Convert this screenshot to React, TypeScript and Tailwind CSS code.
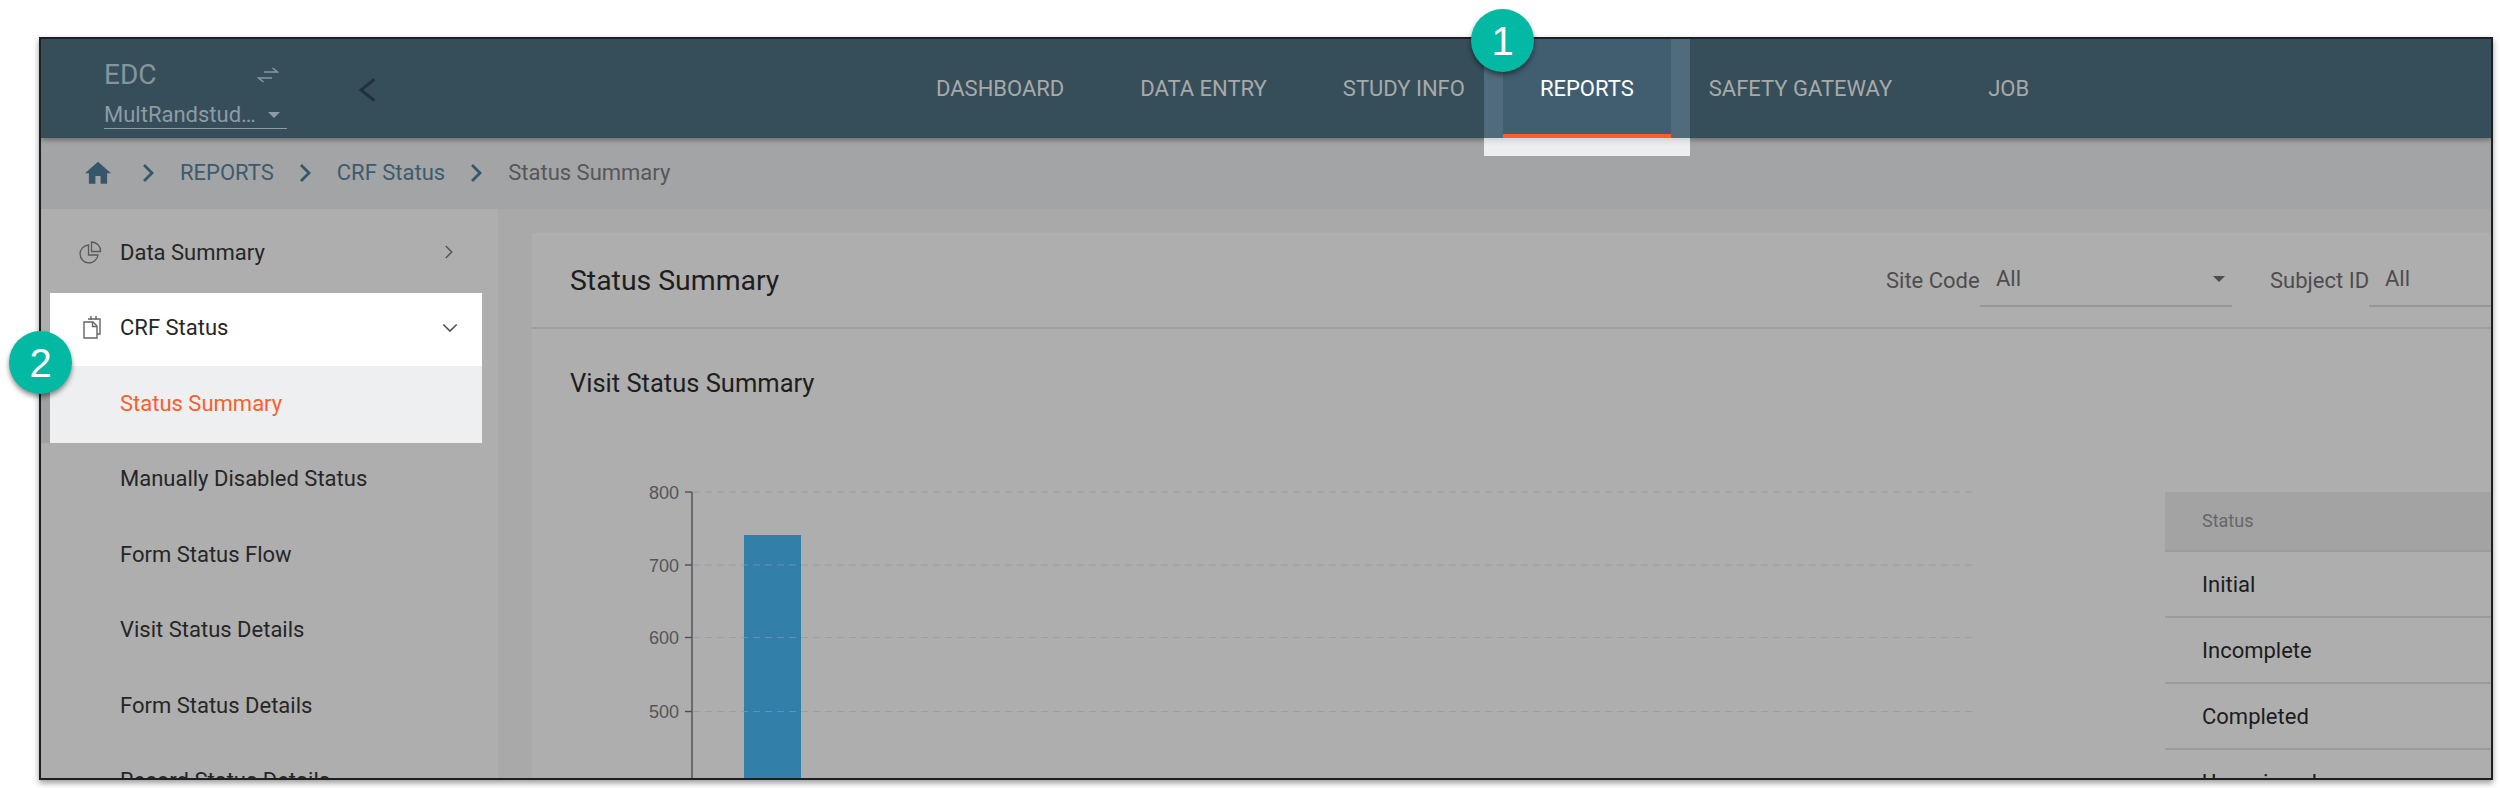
import React from "react";

const Chevron = ({ dir, size, color, width = 2 }: { dir: "left" | "right" | "down"; size: number; color: string; width?: number }) => {
  const d = dir === "left" ? "M16 4 L6 12 L16 20" : dir === "right" ? "M9 4 L17 12 L9 20" : "M4 9 L12 17 L20 9";
  return (
    <svg width={size} height={size} viewBox="0 0 24 24" fill="none" stroke={color} strokeWidth={width} className="shrink-0">
      <path d={d} />
    </svg>
  );
};

const CrumbChevron = () => (
  <div className="flex w-[22px] shrink-0 justify-center">
    <svg width="12" height="18" viewBox="0 0 12 18" fill="none" stroke="#37566a" strokeWidth="2.8">
      <path d="M2 1 L10 9 L2 17" />
    </svg>
  </div>
);

const Caret = ({ color }: { color: string }) => (
  <svg width="12" height="6" viewBox="0 0 12 6" className="shrink-0">
    <path d="M0 0 H12 L6 6 Z" fill={color} />
  </svg>
);

const Swap = () => (
  <svg width="22" height="16" viewBox="0 0 22 16" fill="none" stroke="#8797a0" strokeWidth="1.6">
    <path d="M7 5 H20 M15.5 1 L20.5 5 L15.5 5" />
    <path d="M15 11 H2 M6.5 15 L1.5 11 L6.5 11" />
  </svg>
);

const Home = () => (
  <svg width="26" height="24" viewBox="2 3 20 17.5" fill="#37566a" className="shrink-0">
    <path d="M10 20v-6h4v6h5v-8h3L12 3 2 12h3v8z" />
  </svg>
);

const PieIcon = () => (
  <svg width="23" height="23" viewBox="0 0 23 23" fill="none" stroke="#5a5a5a" strokeWidth="1.3">
    <path d="M9.5 4 A9 9 0 1 0 19 14 H9.5 Z" />
    <path d="M12.5 1 A9 9 0 0 1 21.5 10.5 H12.5 Z" />
  </svg>
);

const DocIcon = () => (
  <svg width="18" height="24" viewBox="0 0 18 24" fill="none" stroke="#666" strokeWidth="1.4">
    <path d="M5 4 H17 V19 H14" />
    <path d="M1 7 H10 L14 11 V23 H1 Z" />
    <path d="M9.5 7 V11.5 H14" />
    <path d="M8 1 V5 M13 1 V5" />
  </svg>
);

const navItems = ["DASHBOARD", "DATA ENTRY", "STUDY INFO", "REPORTS", "SAFETY GATEWAY", "JOB"];
const subItems = ["Manually Disabled Status", "Form Status Flow", "Visit Status Details", "Form Status Details", "Record Status Details"];
const rows = ["Initial", "Incomplete", "Completed", "Unassigned"];
const ticks = [
  { y: 12, label: "800" },
  { y: 85, label: "700" },
  { y: 157.5, label: "600" },
  { y: 231.5, label: "500" },
  { y: 305, label: "400" },
];

const Badge = ({ n, cls }: { n: string; cls: string }) => (
  <div className={`absolute z-30 flex h-[63px] w-[63px] items-center justify-center rounded-full bg-[#03b9a3] font-['Liberation_Sans',sans-serif] text-[40px] leading-none text-white shadow-[0_3px_5px_rgba(0,0,0,0.45)] ${cls}`}>
    {n}
  </div>
);

export default function App() {
  return (
    <div className="relative h-[788px] w-[2500px] overflow-hidden bg-white pl-[39px] pt-[37px] font-[Roboto,sans-serif]">
      <Badge n="1" cls="left-[1471px] top-[9px]" />
      <Badge n="2" cls="left-[9px] top-[331px]" />
      <div className="flex h-[743px] w-[2454px] flex-col overflow-hidden border-2 border-[#1d1f21] bg-[#aeaeae] shadow-[0_3px_6px_rgba(0,0,0,0.4)]">
        {/* header */}
        <header className="relative z-20 flex h-[99px] shrink-0 bg-[#364e5a] shadow-[0_2px_5px_rgba(0,0,0,0.35)]">
          <div className="ml-[63px] flex w-[183px] shrink-0 flex-col pt-[21px]">
            <div className="flex h-[30px] items-center justify-between pr-[8px]">
              <span className="text-[28px] leading-[30px] text-[#84959e]">EDC</span>
              <Swap />
            </div>
            <div className="mt-[12px] flex h-[27px] items-center justify-between border-b border-[#8d9ca4] pr-[7px] text-[22px] leading-[26px] text-[#8d9ca4]">
              <span>MultRandstud…</span>
              <Caret color="#8d9ca4" />
            </div>
          </div>
          <div className="ml-[66px] flex items-center pt-[2px]">
            <Chevron dir="left" size={32} color="#1f323c" width={2.2} />
          </div>
          <nav className="ml-[513px] flex h-full text-[22px] text-[#a8a9a9]">
            {navItems.map((t) =>
              t === "REPORTS" ? (
                <div key={t} className="relative -mx-[19px] flex h-full items-center border-x-[19px] border-[#4f6b7c] bg-[#405e70] px-[37px] text-white">
                  <span>{t}</span>
                  <div className="absolute inset-x-0 bottom-0 h-[4px] bg-[#f9602a]" />
                  <div className="absolute -inset-x-[19px] top-full h-[18px] bg-gradient-to-b from-[#d3d5d7] to-[#eceef0] to-40%" />
                </div>
              ) : (
                <div key={t} className={`flex h-full items-center whitespace-nowrap px-[38px] ${t === "JOB" ? "ml-[20px]" : ""}`}>
                  {t}
                </div>
              )
            )}
          </nav>
        </header>

        {/* breadcrumb */}
        <div className="flex h-[71px] shrink-0 items-center bg-[#a3a4a6] pb-[2px] pl-[44px] text-[22px]">
          <Home />
          <div className="ml-[26px]"><CrumbChevron /></div>
          <span className="ml-[21px] text-[#3d5b6c]">REPORTS</span>
          <div className="ml-[20px]"><CrumbChevron /></div>
          <span className="ml-[21px] text-[#3d5b6c]">CRF Status</span>
          <div className="ml-[20px]"><CrumbChevron /></div>
          <span className="ml-[21px] text-[#555759]">Status Summary</span>
        </div>

        <div className="flex min-h-0 flex-1">
          {/* sidebar */}
          <aside className="w-[457px] shrink-0 bg-[#aeaeae] text-[22px] text-[#262626]">
            <div className="flex h-[84px] items-center pl-[38px] pr-[41px] pt-[2px]">
              <PieIcon />
              <span className="ml-[18px] flex-1">Data Summary</span>
              <Chevron dir="right" size={18} color="#555" width={2} />
            </div>
            <div className="ml-[9px] mr-[16px] flex h-[73px] items-center bg-white pb-[5px] pl-[33px] pr-[22px]">
              <DocIcon />
              <span className="ml-[19px] flex-1">CRF Status</span>
              <Chevron dir="down" size={20} color="#555" width={2} />
            </div>
            <div className="mr-[16px] flex h-[77px] items-center border-l-[9px] border-[#a0a1a2] bg-[#eeeff1] pb-[3px] pl-[70px] text-[#f9602a]">
              Status Summary
            </div>
            <div className="-mt-[2px]">
              {subItems.map((s) => (
                <div key={s} className="flex h-[75.5px] items-center pl-[79px]">{s}</div>
              ))}
            </div>
          </aside>

          {/* content */}
          <main className="min-w-0 flex-1 bg-[#a9a9a9] pl-[34px] pt-[24px]">
            <div className="h-full bg-[#aeaeae]">
              <div className="flex h-[96px] items-start border-b-2 border-[#9e9e9e] pl-[38px] pt-[19px]">
                <h1 className="mt-[13px] text-[28.4px] leading-[32px] text-[#1e1e1e]">Status Summary</h1>
                <div className="ml-auto flex text-[22px] text-[#4d4d4d]">
                  <span className="flex h-[56px] w-[94px] items-center whitespace-nowrap">Site Code</span>
                  <div className="flex h-[55px] w-[252px] items-center justify-between border-b-2 border-[#979797] pl-[16px] pr-[7px]">
                    <span>All</span>
                    <Caret color="#4d4d4d" />
                  </div>
                  <span className="ml-[38px] flex h-[56px] w-[99px] items-center whitespace-nowrap">Subject ID</span>
                  <div className="flex h-[55px] w-[122px] items-center border-b-2 border-[#979797] pl-[16px]">
                    <span>All</span>
                  </div>
                </div>
              </div>
              <h2 className="pl-[38px] pt-[38px] text-[25.5px] leading-[32px] text-[#1e1e1e]">Visit Status Summary</h2>
              <div className="mt-[81px] flex">
                <svg width="1380" height="320" viewBox="0 0 1380 320" className="ml-[68px] shrink-0">
                  <rect x="144" y="55" width="57" height="265" fill="#3280a9" />
                  {ticks.map((t) => (
                    <g key={t.label}>
                      <line x1="93" x2="1373" y1={t.y} y2={t.y} stroke="#8b97a8" strokeOpacity="0.65" strokeDasharray="7 5" strokeWidth="1.2" />
                      <line x1="85" x2="92" y1={t.y} y2={t.y} stroke="#4e4e54" strokeWidth="1.4" />
                      <text x="79" y={t.y + 6.5} textAnchor="end" fontSize="18" fill="#555558" fontFamily="'Liberation Sans', sans-serif">{t.label}</text>
                    </g>
                  ))}
                  <line x1="92" x2="92" y1="12" y2="320" stroke="#4e4e54" strokeWidth="1.4" />
                </svg>
                <div className="ml-[185px] mt-[12px] min-w-0 flex-1">
                  <div className="flex h-[60px] items-center border-b-2 border-[#9c9c9c] bg-[#a3a3a3] pb-[2px] pl-[37px] text-[18px] text-[#666]">Status</div>
                  {rows.map((r) => (
                    <div key={r} className="flex h-[66px] items-center border-b-2 border-[#9c9c9c] pl-[37px] text-[22px] text-[#1c1c1c]">{r}</div>
                  ))}
                </div>
              </div>
            </div>
          </main>
        </div>
      </div>
    </div>
  );
}
